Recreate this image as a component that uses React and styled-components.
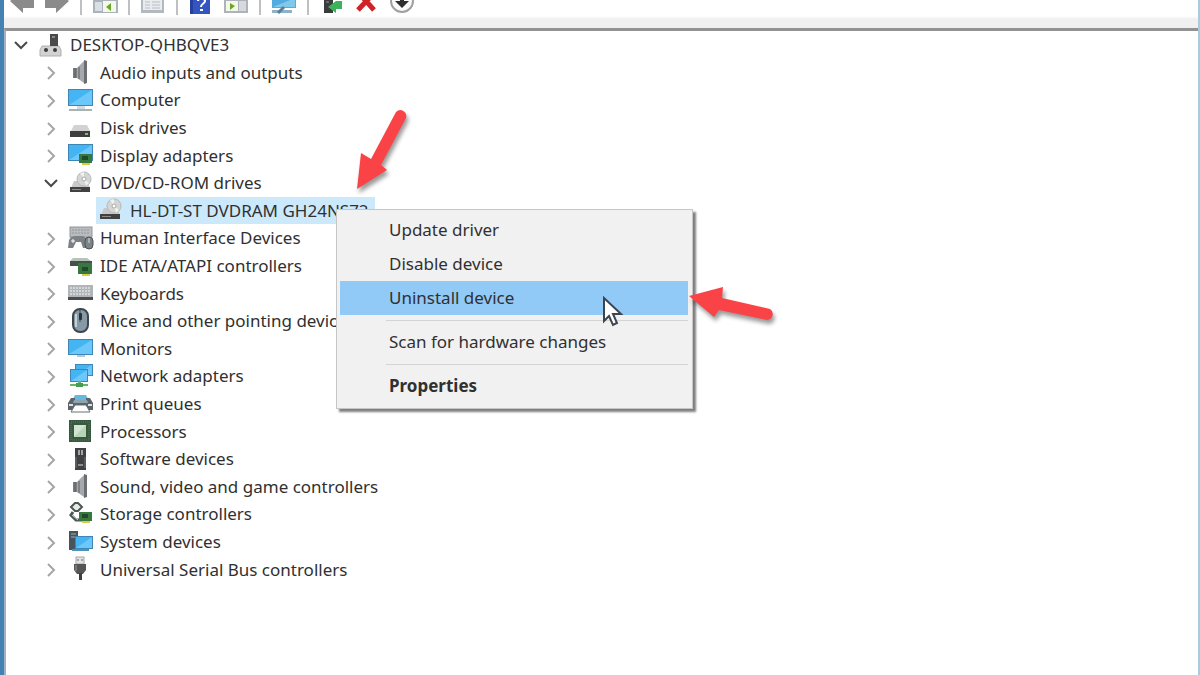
import React, { useState } from "react";
import styled, { createGlobalStyle, css } from "styled-components";

const toolbarItems = [
  { id: 1, icon: "back", name: "Back" },
  { id: 2, icon: "forward", name: "Forward" },
  { id: 3, divider: true },
  { id: 4, icon: "tree", name: "Show console tree" },
  { id: 5, divider: true },
  { id: 6, icon: "properties", name: "Properties" },
  { id: 7, divider: true },
  { id: 8, icon: "help", name: "Help" },
  { id: 9, icon: "action", name: "Show action pane" },
  { id: 10, divider: true },
  { id: 11, icon: "scan", name: "Scan for hardware changes" },
  { id: 12, divider: true },
  { id: 13, icon: "update", name: "Update driver" },
  { id: 14, icon: "remove", name: "Uninstall device" },
  { id: 15, icon: "disable", name: "Disable device" },
];

const devices = [
  { id: 1, level: 0, icon: "root", name: "DESKTOP-QHBQVE3", open: true },
  { id: 2, level: 1, icon: "speaker", name: "Audio inputs and outputs" },
  { id: 3, level: 1, icon: "computer", name: "Computer" },
  { id: 4, level: 1, icon: "disk", name: "Disk drives" },
  { id: 5, level: 1, icon: "display", name: "Display adapters" },
  { id: 6, level: 1, icon: "dvd", name: "DVD/CD-ROM drives", open: true },
  { id: 7, level: 2, icon: "dvd", name: "HL-DT-ST DVDRAM GH24NS72", leaf: true },
  { id: 8, level: 1, icon: "hid", name: "Human Interface Devices" },
  { id: 9, level: 1, icon: "ide", name: "IDE ATA/ATAPI controllers" },
  { id: 10, level: 1, icon: "keyboard", name: "Keyboards" },
  { id: 11, level: 1, icon: "mouse", name: "Mice and other pointing devices" },
  { id: 12, level: 1, icon: "monitor", name: "Monitors" },
  { id: 13, level: 1, icon: "network", name: "Network adapters" },
  { id: 14, level: 1, icon: "printer", name: "Print queues" },
  { id: 15, level: 1, icon: "cpu", name: "Processors" },
  { id: 16, level: 1, icon: "software", name: "Software devices" },
  { id: 17, level: 1, icon: "speaker", name: "Sound, video and game controllers" },
  { id: 18, level: 1, icon: "storage", name: "Storage controllers" },
  { id: 19, level: 1, icon: "system", name: "System devices" },
  { id: 20, level: 1, icon: "usb", name: "Universal Serial Bus controllers" },
];

const menuItems = [
  { id: 1, name: "Update driver" },
  { id: 2, name: "Disable device" },
  { id: 3, name: "Uninstall device" },
  { id: 4, divider: true },
  { id: 5, name: "Scan for hardware changes" },
  { id: 6, divider: true },
  { id: 7, name: "Properties", bold: true },
];

const Screen = ({ x, y, w, h }) => (
  <>
    <rect x={x} y={y} width={w} height={h} fill="#3f86b4" />
    <rect x={x + 1} y={y + 1} width={w - 2} height={h - 2} fill="#45b4f2" />
    <path d={`M${x + 1} ${y + h - 1}L${x + w - 1} ${y + 1}V${y + h - 1}Z`} fill="#6cc8fa" />
  </>
);

const Card = ({ x, y }) => (
  <>
    <rect x={x} y={y} width="13" height="9" fill="#37783f" />
    <rect x={x + 3} y={y + 2} width="6" height="4" fill="#1f4a2b" />
    <rect x={x + 3} y={y + 9} width="8" height="2" fill="#dfc84a" />
  </>
);

const deviceIcons = {
  root: (
    <>
      <path d="M4 14h17l2 4v6H2v-6z" fill="#d2d2d2" stroke="#b0b0b0" />
      <rect x="12" y="2" width="8" height="12" fill="#4a4a4a" />
      <rect x="14" y="4" width="3" height="2" fill="#8a8a8a" />
      <circle cx="8" cy="18" r="2" fill="#3c3c3c" />
      <circle cx="17" cy="18" r="2" fill="#3c3c3c" />
    </>
  ),
  speaker: (
    <>
      <path d="M5 9h4v10H5z" fill="#7c7f83" />
      <path d="M9 9l7-7v22l-7-5z" fill="#a5a8ac" />
      <path d="M16 1l3 1v22l-3 1z" fill="#6b6e72" />
      <path d="M7 9v10M11 8v12" stroke="#595c60" />
    </>
  ),
  computer: (
    <>
      <Screen x={0} y={2} w={25} h={17} />
      <rect x="9" y="19" width="8" height="3" fill="#d5dadd" />
      <rect x="1" y="22" width="23" height="2" fill="#a9b2b6" />
    </>
  ),
  disk: (
    <>
      <path d="M6 10h13l3 6H3z" fill="#d2d2d2" />
      <rect x="2" y="16" width="20" height="6" fill="#3e3e3e" />
      <rect x="17" y="18" width="3" height="2" fill="#7dbb79" />
    </>
  ),
  display: (
    <>
      <Screen x={0} y={2} w={25} h={17} />
      <Card x={11} y={12} />
    </>
  ),
  dvd: (
    <>
      <path d="M6 11h13l3 7H3z" fill="#c9c9c9" />
      <circle cx="16" cy="9" r="7" fill="#d4d6d6" stroke="#b4b8b9" />
      <path d="M16 9l-4-6 4-1zM16 9l5 4-3 3z" fill="#f1f1e6" />
      <circle cx="16" cy="9" r="2" fill="#fff" stroke="#a5aaac" />
      <rect x="2" y="17" width="20" height="5" fill="#414141" />
      <rect x="4" y="19" width="9" height="1" fill="#8b8b8b" />
    </>
  ),
  hid: (
    <>
      <rect x="2" y="2" width="22" height="10" fill="#b9bcbf" stroke="#92969a" />
      <path d="M4 5h18M4 8h18" stroke="#92969a" strokeDasharray="2 1" />
      <path d="M3 12l4-1h8l3 2v10h-3l-2-6h-5l-3 6H0l1-8z" fill="#7d8185" />
      <path d="M5 14v4M3 16h4" stroke="#fff" />
      <rect x="17" y="12" width="8" height="12" rx="4" fill="#7b8489" stroke="#4c5154" />
      <path d="M21 13v5" stroke="#d7dde0" />
    </>
  ),
  ide: (
    <>
      <path d="M5 5h14l4 3H2z" fill="#b6c4b8" />
      <rect x="2" y="8" width="22" height="5" fill="#45504a" />
      <rect x="10" y="10" width="14" height="11" fill="#37783f" />
      <rect x="14" y="14" width="6" height="4" fill="#1f4a2b" />
      <rect x="14" y="21" width="8" height="2" fill="#dfc84a" />
    </>
  ),
  keyboard: (
    <>
      <rect x="0" y="5" width="25" height="15" fill="#b1b5b7" />
      <path d="M2 8h21M2 11h21M2 14h21" stroke="#d3d7d8" strokeWidth="2" strokeDasharray="2 1" />
      <rect x="0" y="17" width="25" height="3" fill="#4b4e50" />
    </>
  ),
  mouse: (
    <>
      <rect x="5" y="1" width="15" height="23" rx="7" fill="#8799a5" stroke="#3c464d" strokeWidth="2" />
      <path d="M8 6v13" stroke="#c4d1d9" strokeWidth="2" />
      <path d="M12 2v12" stroke="#3c464d" />
      <rect x="11" y="5" width="3" height="7" rx="1" fill="#28323a" />
    </>
  ),
  monitor: (
    <>
      <Screen x={0} y={4} w={25} h={16} />
      <rect x="9" y="20" width="8" height="2" fill="#b8c8d0" />
    </>
  ),
  network: (
    <>
      <Screen x={7} y={1} w={18} h={12} />
      <Screen x={2} y={6} w={18} h={13} />
      <rect x="10" y="18" width="3" height="4" fill="#63b56a" />
      <rect x="2" y="21" width="18" height="2" fill="#63b56a" />
      <rect x="8" y="20" width="7" height="4" fill="#469c50" />
    </>
  ),
  printer: (
    <>
      <path d="M7 4h11l3 6H4z" fill="#64b9dd" />
      <path d="M3 7h4v3h11V7h4l3 5v7H0v-7z" fill="#5b6468" />
      <path d="M6 9h13l1 3H5z" fill="#8da5af" />
      <rect x="1" y="13" width="4" height="2" fill="#dde4e7" />
      <rect x="20" y="13" width="4" height="2" fill="#dde4e7" />
      <path d="M7 14h11l4 7H3z" fill="#fff" stroke="#677074" />
    </>
  ),
  cpu: (
    <>
      <rect x="1" y="2" width="22" height="22" fill="#38583f" />
      <rect x="3" y="4" width="18" height="18" fill="none" stroke="#587a5e" strokeDasharray="1 1" />
      <rect x="6" y="7" width="12" height="12" fill="#d2e4d1" />
      <path d="M6 19L18 7v12z" fill="#b7d3b8" />
    </>
  ),
  software: (
    <>
      <rect x="7" y="2" width="11" height="22" fill="#3f4143" />
      <rect x="10" y="4" width="2" height="5" fill="#a3a6a8" />
      <rect x="13" y="4" width="2" height="5" fill="#a3a6a8" />
      <path d="M8 11v11M17 11v11" stroke="#777b7d" />
      <rect x="10" y="18" width="5" height="2" fill="#8d9092" />
    </>
  ),
  storage: (
    <>
      <path d="M3 6l4-4h3l4 4-4 4H7z" fill="#e6ebe6" stroke="#4c5851" strokeWidth="2" />
      <path d="M5 11l-2 3 5 5h8" fill="none" stroke="#4c5851" strokeWidth="3" />
      <path d="M4 14l6 5" stroke="#cdd6cf" />
      <Card x={11} y={11} />
    </>
  ),
  system: (
    <>
      <rect x="1" y="2" width="9" height="19" fill="#46545f" />
      <path d="M3 5h5M3 8h5" stroke="#9fadb8" />
      <Screen x={7} y={7} w={18} h={13} />
      <rect x="4" y="20" width="17" height="2" fill="#4e92bb" />
    </>
  ),
  usb: (
    <>
      <rect x="8" y="1" width="8" height="7" fill="#e3e3e3" stroke="#a5a5a5" />
      <path d="M10 3v2M14 3v2" stroke="#6b6b6b" />
      <path d="M6 8h12v6l-3 4H9l-3-4z" fill="#555" />
      <path d="M8 9v6" stroke="#9a9a9a" />
      <rect x="11" y="17" width="3" height="7" fill="#3f3f3f" />
    </>
  ),
};

const toolIcons = {
  back: <path d="M0 1L4 -2H24V8H13V13Z" fill="#8b8b8b" />,
  forward: <path d="M24 1L20 -2H0V8H11V13Z" fill="#8b8b8b" />,
  tree: (
    <>
      <rect x="0" y="-3" width="25" height="16" fill="#aab2bb" />
      <rect x="2" y="2" width="7" height="9" fill="#d9dfe6" />
      <rect x="10" y="1" width="13" height="11" fill="#f4f8e6" />
      <path d="M18 3v8l-5-4z" fill="#6da52b" />
    </>
  ),
  properties: (
    <>
      <rect x="0" y="-3" width="23" height="16" fill="#b3b9bf" />
      <rect x="2" y="0" width="19" height="10" fill="#e9ecef" />
      <path d="M4 2h5M11 2h8M4 5h5M11 5h8M4 8h5M11 8h8" stroke="#b9bec3" />
    </>
  ),
  help: (
    <>
      <rect x="1" y="-3" width="20" height="17" fill="#3454c0" />
      <rect x="1" y="-3" width="3" height="17" fill="#2640a0" />
      <path d="M9 1c0-3 7-3 7 0 0 3-4 2-4 6" fill="none" stroke="#fff" strokeWidth="2" />
      <rect x="11" y="9" width="3" height="2" fill="#fff" />
    </>
  ),
  action: (
    <>
      <rect x="0" y="-3" width="24" height="16" fill="#aeb2ba" />
      <rect x="2" y="1" width="12" height="10" fill="#f4f8e6" />
      <path d="M6 3v7l5-4z" fill="#6da52b" />
      <rect x="15" y="1" width="7" height="10" fill="#d6d9de" />
    </>
  ),
  scan: (
    <>
      <rect x="0" y="-3" width="24" height="11" fill="#52acdf" />
      <path d="M1 7L23 -2v9z" fill="#80c8ee" />
      <rect x="0" y="10" width="20" height="3" fill="#8fb2c4" />
      <path d="M12 7l-6 6" stroke="#54819c" strokeWidth="3" />
    </>
  ),
  update: (
    <>
      <rect x="4" y="-3" width="9" height="16" fill="#3b3b3b" />
      <path d="M6 2h3" stroke="#999" />
      <path d="M22 1v8h-6v4L8 7l8-6z" fill="#3cb35a" />
    </>
  ),
  remove: <path d="M3 -8L19 10M20 -8L3 10" stroke="#cf2128" strokeWidth="5" />,
  disable: (
    <>
      <circle cx="12" cy="1" r="11" fill="#fafafa" stroke="#a0a0a0" strokeWidth="2" />
      <path d="M10 -5h4v6h5l-7 7-7-7h5z" fill="#2e2e2e" />
    </>
  ),
};

const App = () => {
  const [active, setActive] = useState(3);

  return (
    <Window>
      <GlobalStyle />
      <Toolbar role="toolbar" aria-label="Device Manager">
        {toolbarItems.map((item) =>
          item.divider ? (
            <ToolDivider key={item.id} />
          ) : (
            <ToolButton key={item.id} aria-label={item.name}>
              <svg width="26" height="15" viewBox="0 0 26 15" aria-hidden="true">
                {toolIcons[item.icon]}
              </svg>
            </ToolButton>
          )
        )}
      </Toolbar>

      <Pane>
        <Tree aria-label="Devices">
          {devices.map((device) => (
            <Row key={device.id} $level={device.level}>
              {device.leaf ? (
                <ToggleSpace />
              ) : (
                <Toggle
                  aria-label={`Expand ${device.name}`}
                  aria-expanded={!!device.open}
                  $open={device.open}
                >
                  <svg width="16" height="16" viewBox="0 0 16 16" aria-hidden="true">
                    <path d={device.open ? "M1 5l6 6 6-6" : "M4 3l6 6-6 6"} />
                  </svg>
                </Toggle>
              )}
              <Entry $selected={device.leaf}>
                <svg width="26" height="26" viewBox="0 0 26 26" aria-hidden="true">
                  {deviceIcons[device.icon]}
                </svg>
                {device.name}
              </Entry>

              {/* Context menu of the selected drive */}
              {device.leaf && (
                <Menu role="menu">
                  {menuItems.map((item) =>
                    item.divider ? (
                      <MenuDivider key={item.id} />
                    ) : (
                      <MenuItem
                        key={item.id}
                        role="menuitem"
                        $active={active === item.id}
                        $bold={item.bold}
                        onMouseEnter={() => setActive(item.id)}
                      >
                        {item.name}
                      </MenuItem>
                    )
                  )}
                  <Cursor width="22" height="32" viewBox="0 0 22 32" aria-hidden="true">
                    <path
                      d="M2 2v23l5-5 4 9 4-2-4-9h8z"
                      fill="#fff"
                      stroke="#3d464f"
                      strokeWidth="2"
                    />
                  </Cursor>
                  <MenuArrow width="100" height="50" viewBox="0 0 100 50" aria-hidden="true">
                    <path d="M9 15L43 6 42 17 90 28a6 6 0 0 1-3 11L39 29 34 36Z" />
                  </MenuArrow>
                </Menu>
              )}
              {device.leaf && (
                <RowArrow width="70" height="100" viewBox="0 0 70 100" aria-hidden="true">
                  <path d="M11 86L15 50 25 56 50 9a6 6 0 0 1 10 6L35 62 41 67Z" />
                </RowArrow>
              )}
            </Row>
          ))}
        </Tree>
      </Pane>
    </Window>
  );
};

export default App;

const GlobalStyle = createGlobalStyle`
  * {
    box-sizing: border-box;
  }

  body {
    margin: 0;
    background: #fff;
    overflow: hidden;
  }

  button {
    border: none;
    padding: 0;
    background: none;
    font: inherit;
    color: inherit;
  }
`;

const Window = styled.div`
  display: flex;
  flex-direction: column;
  min-height: 100vh;
  border-left: 4px solid #4382b3;
  border-right: 2px solid #a9cbe0;
  font-family: "Noto Sans", "Open Sans", sans-serif;
  font-size: 17px;
  color: #303030;
`;

const Toolbar = styled.div`
  display: flex;
  align-items: flex-start;
  gap: 11px;
  height: 28px;
  padding-left: 6px;
  background: linear-gradient(#fff 16px, #f0f0f0 19px);
`;

const ToolButton = styled.button`
  width: 24px;
  height: 15px;

  svg {
    display: block;
  }
`;

const ToolDivider = styled.div`
  width: 2px;
  height: 15px;
  background: #c0c0c0;
`;

const Pane = styled.main`
  flex: 1;
  border-top: 3px solid #929292;
  border-left: 2px solid #a3b1c0;
`;

const Tree = styled.ul`
  display: grid;
  grid-auto-rows: 1fr;
  height: 552px;
  margin: 0;
  padding: 0;
  list-style: none;
`;

const Row = styled.li`
  position: relative;
  display: flex;
  align-items: center;
  gap: 6px;
  min-height: 0;
  padding-left: ${({ $level }) => 8 + $level * 30}px;
  white-space: nowrap;
`;

const Toggle = styled.button`
  width: 16px;
  height: 16px;

  svg {
    display: block;
    fill: none;
    stroke: ${({ $open }) => ($open ? "#4a4a4a" : "#a6a6a6")};
    stroke-width: 2px;
  }
`;

const ToggleSpace = styled.span`
  width: 16px;
`;

const Entry = styled.span`
  display: flex;
  align-items: center;
  gap: 6px;
  height: 27px;
  padding: 0 6px 0 2px;
  ${({ $selected }) =>
    $selected &&
    css`
      background: #cce8fb;
    `}
`;

const Menu = styled.div`
  position: absolute;
  z-index: 2;
  top: 12px;
  left: 330px;
  width: 357px;
  padding: 3px 4px 5px 3px;
  border: 1px solid #c6c6c6;
  background: #f1f1f1;
  box-shadow: 3px 3px 2px rgba(0, 0, 0, 0.5);
`;

const MenuItem = styled.button`
  display: block;
  width: 100%;
  height: 34px;
  padding-left: 49px;
  text-align: left;
  font-weight: ${({ $bold }) => ($bold ? 700 : 400)};
  background: ${({ $active }) => ($active ? "#91c9f7" : "none")};
`;

const MenuDivider = styled.div`
  height: 10px;
  margin-left: 46px;
  padding: 5px 0 4px;
  background: #d4d4d4 content-box;
`;

const Cursor = styled.svg`
  position: absolute;
  top: 86px;
  left: 265px;
`;

const arrow = css`
  position: absolute;
  fill: #fa4346;
  filter: drop-shadow(2px 4px 2px rgba(0, 0, 0, 0.4));
  pointer-events: none;
`;

const MenuArrow = styled.svg`
  ${arrow}
  top: 71px;
  left: 343px;
`;

const RowArrow = styled.svg`
  ${arrow}
  top: -94px;
  left: 340px;
`;
